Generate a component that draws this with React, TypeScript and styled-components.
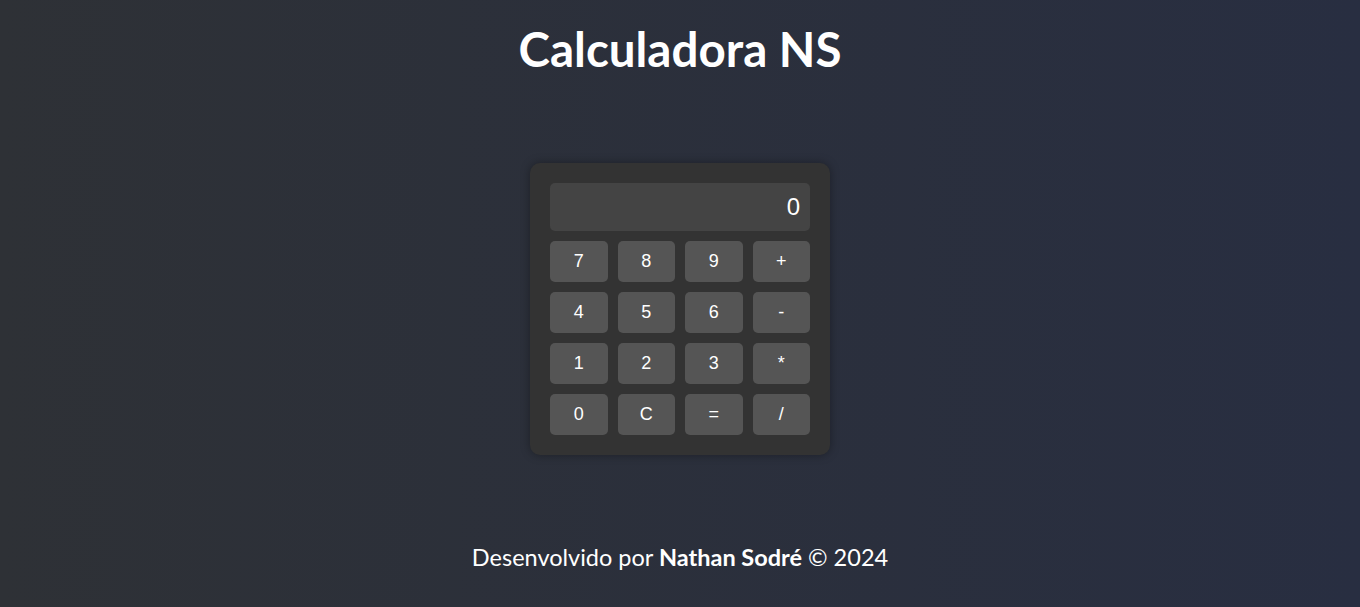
import React, { useState } from "react";
import styled, { createGlobalStyle } from "styled-components";

const GlobalStyle = createGlobalStyle`
  html, body { margin: 0; padding: 0; }
  body {
    background: linear-gradient(to right, #2e3136, #282e41);
    color: #fff;
    font-family: Lato, "Noto Sans", sans-serif;
  }
  * { box-sizing: border-box; }
`;

const Page = styled.div`
  min-height: 100vh;
  display: flex;
  flex-direction: column;
  align-items: center;
`;

const Title = styled.h1`
  margin: 20px 0 0;
  font-family: Lato, sans-serif;
  font-weight: 700;
  font-size: 47.5px;
  line-height: 57.6px;
  color: #fff;
`;

const Main = styled.main`
  flex: 1;
  display: flex;
  align-items: center;
  justify-content: center;
  width: 100%;
`;

const Calculator = styled.div`
  width: 300px;
  padding: 20px;
  background: #333333;
  border-radius: 10px;
  box-shadow: 0 0 10px rgba(0, 0, 0, 0.35);
`;

const Display = styled.div`
  height: 48px;
  background: #444444;
  border-radius: 5px;
  padding: 0 10px;
  display: flex;
  align-items: center;
  justify-content: flex-end;
  font-family: "Liberation Sans", Arial, sans-serif;
  font-size: 24px;
  color: #fff;
  margin-bottom: 10px;
`;

const Keys = styled.div`
  display: grid;
  grid-template-columns: repeat(4, 1fr);
  gap: 10px;
`;

const Key = styled.button`
  height: 41px;
  border: none;
  border-radius: 5px;
  background: #555555;
  color: #fff;
  font-family: "Liberation Sans", Arial, sans-serif;
  font-size: 18px;
  padding: 0;
  cursor: pointer;
`;

const Footer = styled.footer`
  padding: 3px 0 36px;
  font-family: Lato, sans-serif;
  font-size: 23.5px;
  line-height: 1.2;
  color: #fff;
`;

const keys = ["7", "8", "9", "+", "4", "5", "6", "-", "1", "2", "3", "*", "0", "C", "=", "/"];

export default function App() {
  const [value] = useState("0");
  return (
    <>
      <GlobalStyle />
      <Page>
        <Title>Calculadora NS</Title>
        <Main>
          <Calculator>
            <Display>{value}</Display>
            <Keys>
              {keys.map((k) => (
                <Key key={k}>{k}</Key>
              ))}
            </Keys>
          </Calculator>
        </Main>
        <Footer>
          Desenvolvido por <strong>Nathan Sodré</strong> © 2024
        </Footer>
      </Page>
    </>
  );
}
